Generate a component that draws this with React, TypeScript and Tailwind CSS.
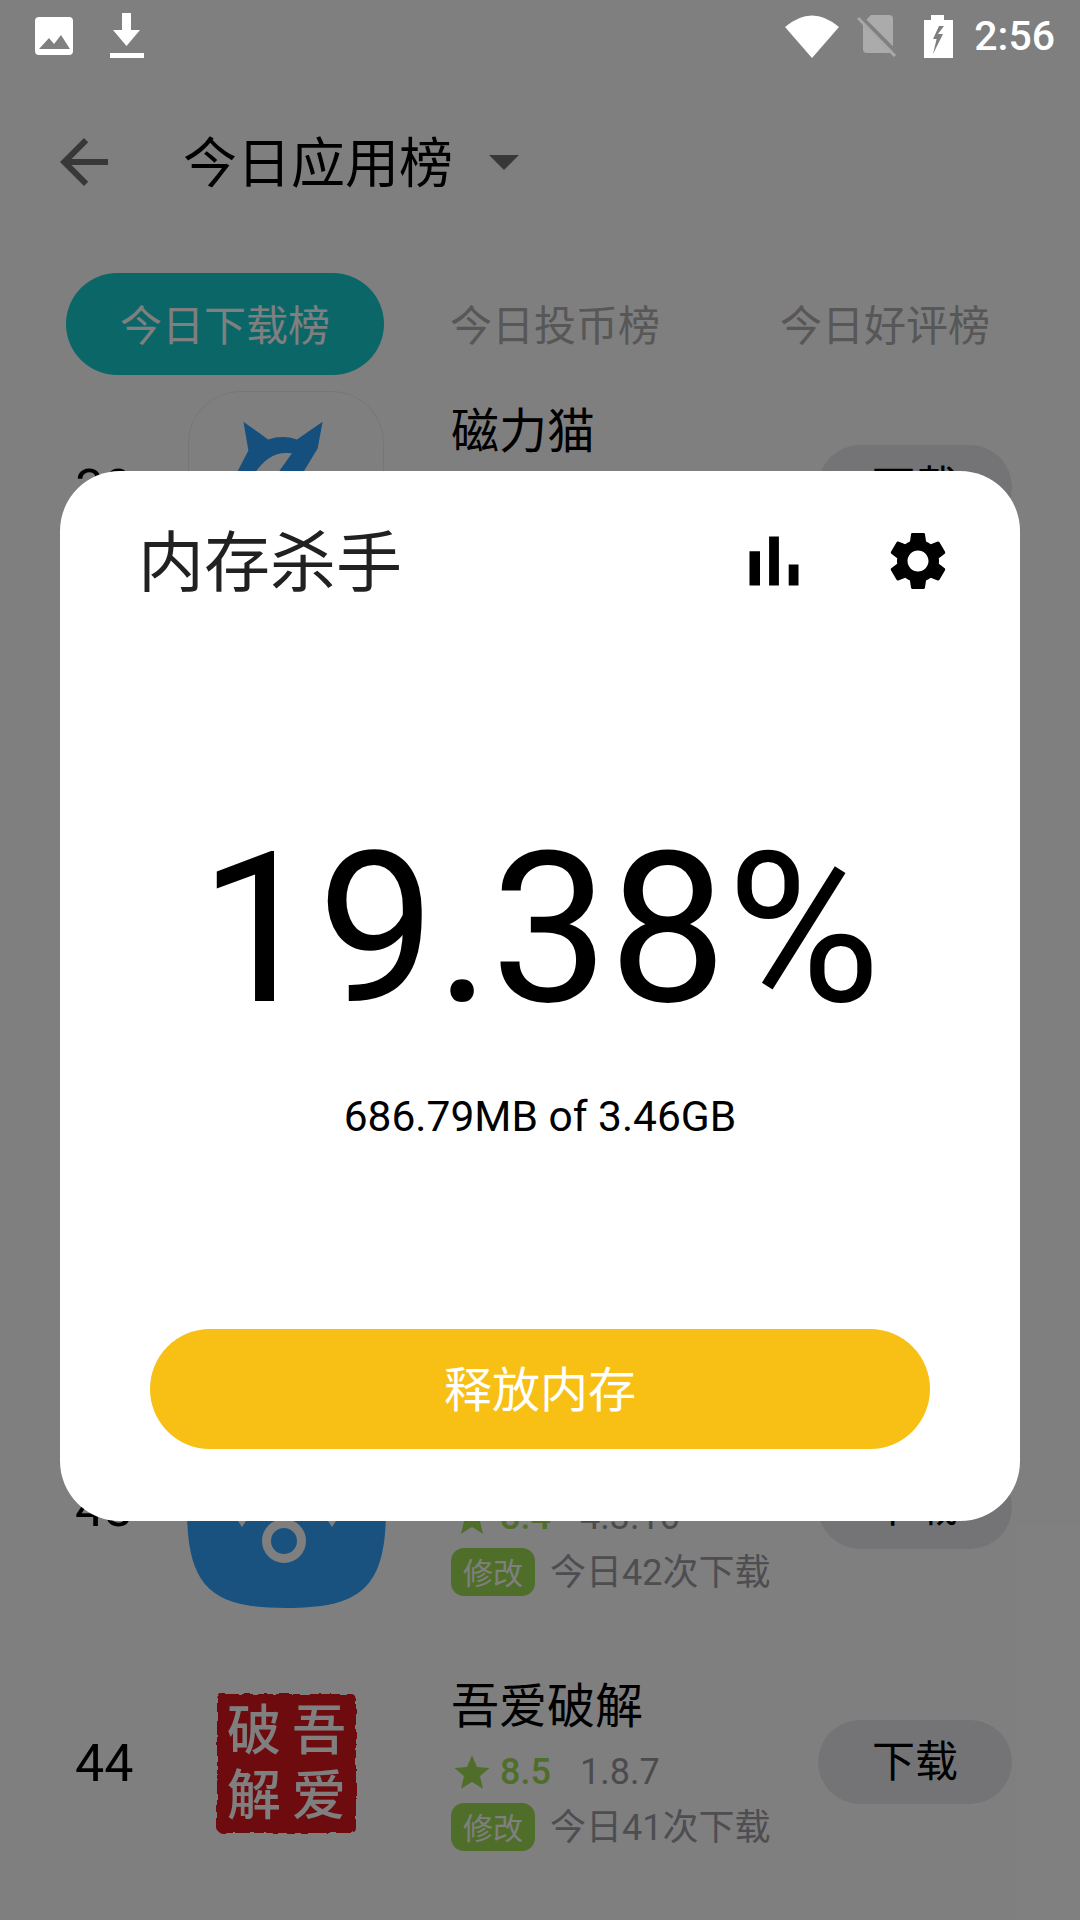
import React from 'react';

type RowProps = {
  rank: number;
  icon: React.ReactNode;
  title?: string;
  rating?: string;
  version?: string;
  count?: string;
};

function CatIcon() {
  return (
    <div className="-ml-[2px] w-[196px] h-[196px] rounded-[52px] border border-[#ececec] bg-white">
      <svg viewBox="0 0 196 196" className="w-full h-full">
        <path
          d="M55 30 L80 48 Q95 43 109 48 L135 30 L130 57 L110 90 L84 90 L104 62 Q78 58 62 90 L44 90 L60 59 Z"
          fill="#2a9ffb"
        />
      </svg>
    </div>
  );
}

function PigIcon() {
  return (
    <svg viewBox="0 0 199 198" className="w-[199px] h-[198px]">
      <path
        d="M0 99 C0 20 25 0 99 0 C174 0 199 20 199 99 C199 178 174 198 99 198 C25 198 0 178 0 99 Z"
        fill="#34a4ff"
      />
      <circle cx="97" cy="131" r="17.5" fill="none" stroke="#ffffff" strokeWidth="9" />
      <path d="M49 108 H61 L55 117 Z" fill="#ffffff" />
      <path d="M139 108 H151 L145 117 Z" fill="#ffffff" />
    </svg>
  );
}

function SealIcon() {
  return (
    <div className="relative w-[199px] h-[199px] flex items-center justify-center">
      <svg viewBox="0 0 199 199" className="absolute inset-0 w-full h-full">
        <defs>
          <filter id="rough" x="-5%" y="-5%" width="110%" height="110%">
            <feTurbulence type="fractalNoise" baseFrequency="0.12" numOctaves="2" seed="4" />
            <feDisplacementMap in="SourceGraphic" scale="5" />
          </filter>
        </defs>
        <g filter="url(#rough)">
          <rect x="30" y="30" width="139" height="139" rx="5" fill="#dc141c" />
        </g>
      </svg>
      <div className="relative grid grid-cols-[65px_65px] grid-rows-[65px_65px] text-center text-[54px] leading-[65px] font-medium text-white">
        <span className="overflow-hidden">破</span>
        <span className="overflow-hidden">吾</span>
        <span className="overflow-hidden">解</span>
        <span className="overflow-hidden">爱</span>
      </div>
    </div>
  );
}

function Row({ rank, icon, title, rating, version, count }: RowProps) {
  return (
    <div className="h-[255px] flex items-center pl-[75px] pr-[68px]">
      <div className="w-[112px] text-[52px] leading-none text-black">{rank}</div>
      <div className="w-[199px] h-[199px] flex items-center justify-center">{icon}</div>
      <div className="self-start ml-[65px] pt-[41px] flex flex-col">
        <div className="h-[60px] text-[48px] leading-[60px] text-black">{title}</div>
        {rating && (
          <div className="mt-[12px] h-[46px] flex items-center text-[36px]">
            <svg viewBox="0 0 24 24" className="ml-[1px] w-[40px] h-[40px] shrink-0" fill="#9edc54">
              <path d="M12 2l3 7 7.5.6-5.7 5 1.8 7.4L12 18l-6.6 4 1.8-7.4-5.7-5L9 9z" />
            </svg>
            <span className="ml-[8px] font-medium text-[#9edc54]">{rating}</span>
            <span className="ml-[29px] text-[#96969e]">{version}</span>
          </div>
        )}
        {count && (
          <div className="mt-[7px] flex items-center">
            <span className="w-[84px] h-[48px] pt-[2px] rounded-[13px] bg-[#9edc54] flex items-center justify-center text-[30px] text-white">
              修改
            </span>
            <span className="ml-[15px] pt-[2px] text-[36px] leading-[48px] text-[#9a9aa4]">{count}</span>
          </div>
        )}
      </div>
      <button className="ml-auto mb-[4px] w-[194px] h-[84px] pt-[2px] rounded-[42px] bg-[#e8e8ee] text-[43px] leading-none text-black">
        下载
      </button>
    </div>
  );
}

function StatusBar() {
  return (
    <div className="relative z-20 h-[72px] flex items-center pl-[35px] pr-[25px]">
      <svg viewBox="0 0 38 38" className="w-[38px] h-[38px]">
        <rect width="38" height="38" rx="4" fill="#ffffff" />
        <path d="M4 32 L14 21 L19 27 L26 18 L35 32 Z" fill="#808080" />
      </svg>
      <svg viewBox="0 0 34 46" className="ml-[37px] w-[34px] h-[46px]">
        <path d="M12 0 H21 V17 H30 L16.5 33 L3 17 H12 Z M0 40 H34 V45 H0 Z" fill="#ffffff" />
      </svg>
      <svg viewBox="0 0 54 43" className="ml-auto w-[54px] h-[43px]">
        <path d="M0 12 Q27 -11 54 12 L27 43 Z" fill="#ffffff" />
      </svg>
      <svg viewBox="0 0 40 42" className="ml-[18px] w-[40px] h-[42px]">
        <path d="M14 0 H32 Q36 0 36 4 V34 Q36 38 32 38 H10 Q6 38 6 34 V8 Z" fill="#ababab" />
        <path d="M3 1 L41 39" stroke="#808080" strokeWidth="4" />
        <path d="M1 3 L38 41" stroke="#a8a8a8" strokeWidth="3" />
      </svg>
      <svg viewBox="0 0 29 43" className="ml-[27px] w-[29px] h-[43px]">
        <path
          d="M7 0 H20 V5 H29 V43 H0 V5 H7 Z M15 11 L9 24 H12.6 L9 39 L19 19 H14 L20 11 Z"
          fill="#ffffff"
          fillRule="evenodd"
        />
      </svg>
      <span className="ml-[21px] text-[41px] leading-none font-medium text-white">2:56</span>
    </div>
  );
}

export default function App() {
  return (
    <div className="relative w-[1080px] h-[1920px] overflow-hidden bg-white font-['Roboto','Noto_Sans_CJK_SC',sans-serif]">
      <StatusBar />

      {/* Toolbar */}
      <div className="h-[180px] flex items-center">
        <svg viewBox="0 0 24 24" className="ml-[48px] w-[72px] h-[72px]" fill="#707070">
          <path d="M20 11H7.83l5.59-5.59L12 4l-8 8 8 8 1.41-1.41L7.83 13H20v-2z" />
        </svg>
        <span className="ml-[63px] pt-[5px] text-[54px] leading-none text-black">今日应用榜</span>
        <div className="ml-[36px] w-0 h-0 border-x-[15px] border-x-transparent border-t-[15px] border-t-[#707070]" />
      </div>

      {/* Tabs */}
      <div className="relative z-10 mt-[21px] h-[102px] flex items-center pl-[66px] text-[42px]">
        <div className="w-[318px] h-[102px] pt-[5px] rounded-[51px] bg-[#16ccd0] flex items-center justify-center text-white">
          今日下载榜
        </div>
        <span className="ml-[66px] pt-[5px] text-[#aeaeae]">今日投币榜</span>
        <span className="ml-[120px] pt-[5px] text-[#aeaeae]">今日好评榜</span>
      </div>

      {/* List, rows 40 to 42 sit fully behind the dialog */}
      <div className="-mt-[14px]">
        <Row rank={39} icon={<CatIcon />} title="磁力猫" />
        <div className="h-[765px]" />
        <Row rank={43} icon={<PigIcon />} rating="8.4" version="4.3.16" count="今日42次下载" />
        <Row rank={44} icon={<SealIcon />} title="吾爱破解" rating="8.5" version="1.8.7" count="今日41次下载" />
      </div>

      {/* Dialog */}
      <div className="absolute inset-0 z-10 bg-black/50 pt-[471px] px-[60px]">
        <div className="h-[1050px] rounded-[60px] bg-white flex flex-col">
          <div className="pt-[48px] pl-[78px] pr-[67px] flex items-center">
            <span className="pt-[3px] text-[66px] leading-[84px] text-[#212121]">内存杀手</span>
            <svg viewBox="0 0 24 24" className="ml-auto mb-[3px] w-[84px] h-[84px]" fill="#000000">
              <path d="M5 9.2h3V19H5zM10.6 5h2.8v14h-2.8zm5.6 8H19v6h-2.8z" />
            </svg>
            <svg viewBox="0 0 24 24" className="ml-[67px] mb-[3px] w-[70px] h-[70px]" fill="#000000">
              <path d="M19.14 12.94c.04-.3.06-.61.06-.94 0-.32-.02-.64-.07-.94l2.03-1.58c.18-.14.23-.41.12-.61l-1.92-3.32c-.12-.22-.37-.29-.59-.22l-2.39.96c-.5-.38-1.03-.7-1.62-.94l-.36-2.54c-.04-.24-.24-.41-.48-.41h-3.84c-.24 0-.43.17-.47.41l-.36 2.54c-.59.24-1.13.57-1.62.94l-2.39-.96c-.22-.08-.47 0-.59.22L2.74 8.87c-.12.21-.08.47.12.61l2.03 1.58c-.05.3-.09.63-.09.94s.02.64.07.94l-2.03 1.58c-.18.14-.23.41-.12.61l1.92 3.32c.12.22.37.29.59.22l2.39-.96c.5.38 1.03.7 1.62.94l.36 2.54c.05.24.24.41.48.41h3.84c.24 0 .44-.17.47-.41l.36-2.54c.59-.24 1.13-.56 1.62-.94l2.39.96c.22.08.47 0 .59-.22l1.92-3.32c.12-.22.07-.47-.12-.61l-2.01-1.58zM12 15.6c-1.98 0-3.6-1.62-3.6-3.6s1.62-3.6 3.6-3.6 3.6 1.62 3.6 3.6-1.62 3.6-3.6 3.6z" />
            </svg>
          </div>

          <div className="mt-[203px] h-[240px] flex items-center justify-center text-[210px] leading-none text-black">
            19.38%
          </div>
          <div className="mt-[43px] h-[50px] flex items-center justify-center text-[42.5px] leading-none text-black">
            686.79MB of 3.46GB
          </div>

          <button className="mt-[187px] mx-[90px] h-[120px] pt-[4px] rounded-[60px] bg-[#f8bf14] text-[48px] leading-none text-white">
            释放内存
          </button>
        </div>
      </div>
    </div>
  );
}
